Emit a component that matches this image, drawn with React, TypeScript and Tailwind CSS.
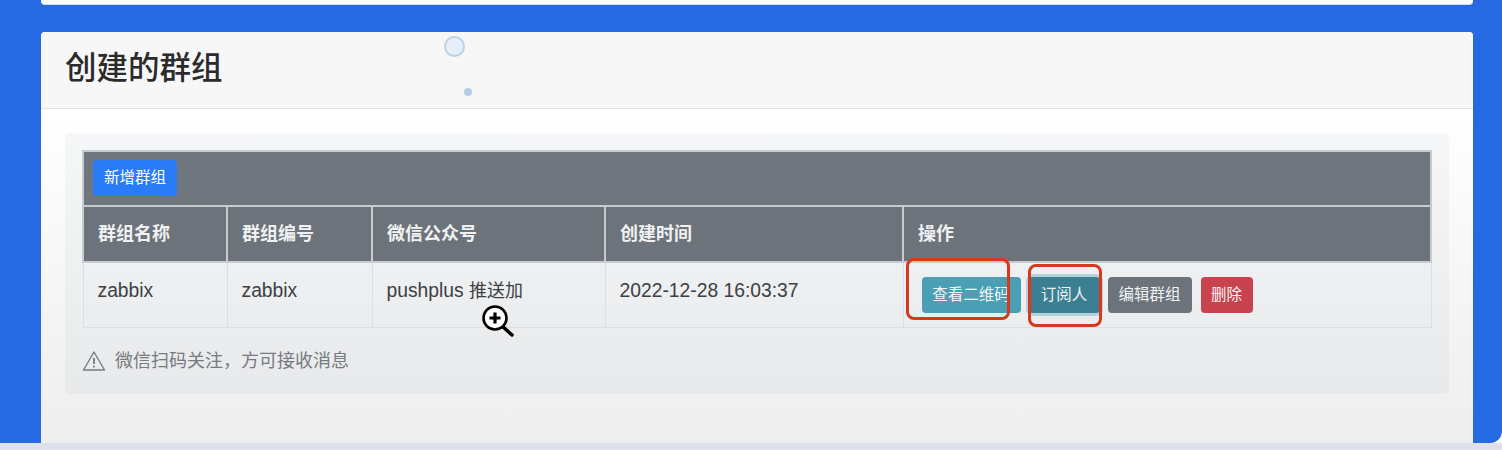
const columns = [
  { name: "群组名称", width: "w-[144px]" },
  { name: "群组编号", width: "w-[145px]" },
  { name: "微信公众号", width: "w-[233px]" },
  { name: "创建时间", width: "w-[298px]" },
  { name: "操作", width: "w-[528px]" },
];

const cellFont = { fontFamily: '"Liberation Sans", "Noto Sans CJK SC", sans-serif' };

// 放大镜光标
function ZoomCursor() {
  return (
    <svg className="absolute left-[480px] top-[303px]" width="36" height="36" viewBox="0 0 36 36" fill="none">
      <path d="M22 23 L32 32" stroke="#000" strokeWidth="3.5" strokeLinecap="round" />
      <circle cx="15" cy="15" r="11.5" fill="#fff" stroke="#000" strokeWidth="2.6" />
      <path d="M15 9.5 V20.5 M9.5 15 H20.5" stroke="#000" strokeWidth="3.2" />
    </svg>
  );
}

function WarningIcon() {
  return (
    <svg width="24" height="22" viewBox="0 0 24 22" fill="none" stroke="#777b80" strokeWidth="1.4">
      <path d="M12 2 L22.5 20 H1.5 Z" strokeLinejoin="round" />
      <path d="M12 8 V14" strokeWidth="1.8" />
      <path d="M12 15.8 V17.6" strokeWidth="1.8" />
    </svg>
  );
}

export default function App() {
  return (
    <div className="relative h-[450px] w-[1502px] overflow-hidden bg-white" style={cellFont}>
      <div className="flex h-[443px] flex-col rounded-br-[12px] bg-[#256ae2] px-[41px] pr-[29px]">
        <div className="h-[5px] shrink-0 rounded-b-[4px] border-b border-[#cfdcf3] bg-white" />
        <div className="mt-[27px] flex flex-1 flex-col rounded-t-[4px] bg-white">
          <div className="flex h-[77px] shrink-0 items-center rounded-t-[4px] border-b border-[#e2e2e2] bg-[#f7f7f7] px-6 pb-[3px]">
            <h1 className="text-[31.5px] font-medium leading-none text-[#2b2b2b]">创建的群组</h1>
          </div>
          <div className="flex-1 bg-gradient-to-b from-white to-[#eeeeee] px-6 pt-6">
            <div className="h-[261px] rounded-[5px] bg-gradient-to-b from-[#f6f7f9] to-[#e8e9eb] pl-[17px] pt-[17px]">
              <table className="w-[1348px] table-fixed border-collapse text-[19.3px]">
                <colgroup>
                  {columns.map((col) => (
                    <col key={col.name} className={col.width} />
                  ))}
                </colgroup>
                <thead>
                  <tr className="h-[55px] bg-[#6f767d]">
                    <th colSpan={5} className="border-2 border-[#c8cbce] px-[9px] pb-[2px] text-left">
                      <button className="h-[36px] w-[84px] whitespace-nowrap rounded-[4px] bg-[#2a7bf6] text-[15.5px] font-normal text-white">
                        新增群组
                      </button>
                    </th>
                  </tr>
                  <tr className="h-[56px] bg-[#6c737a] text-left text-[18px] text-[#f0f1f2]">
                    {columns.map((col) => (
                      <th key={col.name} className="border-2 border-[#c8cbce] px-[14px] font-semibold">
                        {col.name}
                      </th>
                    ))}
                  </tr>
                </thead>
                <tbody>
                  <tr className="h-[65px] text-[#3c3f43]">
                    <td className="border border-[#dcdee1] px-[14px] pb-[6px]">zabbix</td>
                    <td className="border border-[#dcdee1] px-[14px] pb-[6px]">zabbix</td>
                    <td className="border border-[#dcdee1] px-[14px] pb-[6px]">
                      pushplus <span className="text-[18px]">推送加</span>
                    </td>
                    <td className="border border-[#dcdee1] px-[14px] pb-[6px]">2022-12-28 16:03:37</td>
                    <td className="border border-[#dcdee1] pl-[18px]">
                      <div className="flex gap-[8px] whitespace-nowrap text-[15.5px] text-[#f1f4f5]">
                        <button className="h-[36px] w-[99px] rounded-[4px] bg-[#4a9fb4]">查看二维码</button>
                        <button className="h-[36px] w-[71px] rounded-[4px] bg-[#3a7f92] shadow-[0_0_0_3px_rgba(74,159,180,0.35)]">订阅人</button>
                        <button className="h-[36px] w-[84px] rounded-[4px] bg-[#6c737a]">编辑群组</button>
                        <button className="ml-[1px] h-[36px] w-[52px] rounded-[4px] bg-[#c9434f]">删除</button>
                      </div>
                    </td>
                  </tr>
                </tbody>
              </table>
              <div className="mt-[20px] flex items-center gap-[9px] text-[18px] text-[#777b80]">
                <WarningIcon />
                <span>微信扫码关注，方可接收消息</span>
              </div>
            </div>
          </div>
        </div>
      </div>
      <div className="h-[7px] bg-[#dfe1ea]" />

      {/* 录屏的点击光圈 */}
      <div className="absolute left-[444px] top-[36px] size-[21px] rounded-full border-2 border-[#b9d3ea] bg-[#e6eff7]" />
      <div className="absolute left-[464px] top-[88px] size-[8px] rounded-full bg-[#b4cee6]" />

      {/* 红色标注框 */}
      <div className="absolute left-[906px] top-[258px] h-[62px] w-[104px] rounded-[8px] border-[3px] border-[#d8391c]" />
      <div className="absolute left-[1028px] top-[264px] h-[63px] w-[74px] rounded-[8px] border-[3px] border-[#d8391c]" />

      <ZoomCursor />
    </div>
  );
}
